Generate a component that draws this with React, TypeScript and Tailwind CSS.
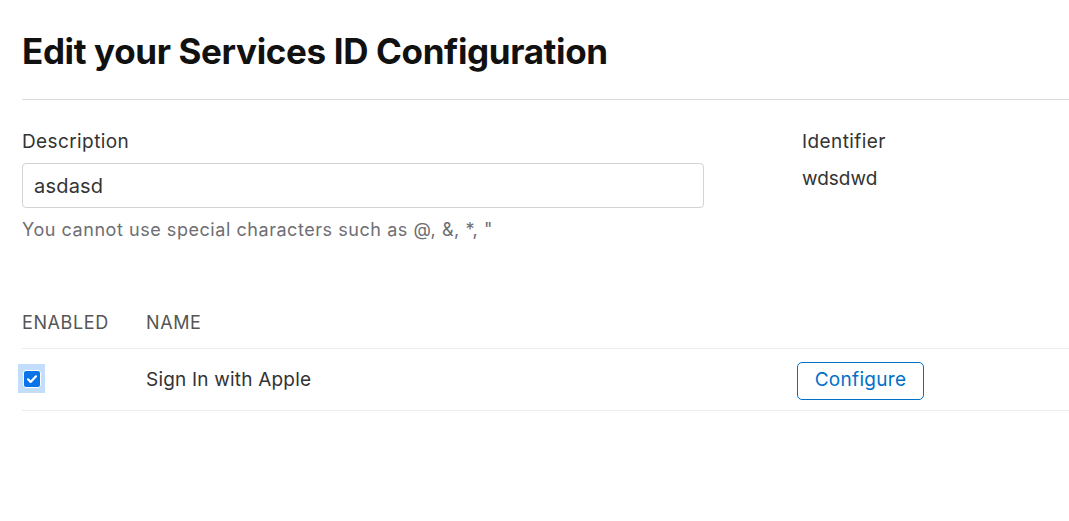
export default function App() {
  return (
    <div className="min-h-[521px] bg-white pl-[22px] font-['Inter',sans-serif] text-[#333]">
      <h1 className="pt-[29px] text-[35px] leading-[44px] font-bold text-[#111] tracking-[-0.36px]">
        Edit your Services ID Configuration
      </h1>
      <div className="mt-[26px] h-px bg-[#dcdcdc]" />

      <div className="mt-[30px] flex">
        <div className="w-[682px]">
          <div className="text-[19px] leading-[24px] tracking-[0.4px] text-[#333]">Description</div>
          <div className="mt-[9px] flex h-[45px] items-center rounded-[4px] border border-[#d2d2d7] px-[11px] text-[20px] tracking-[0.2px] text-[#333]">
            asdasd
          </div>
          <div className="mt-[11px] text-[18px] leading-[22px] tracking-[0.55px] text-[#6e6e73]">
            You cannot use special characters such as @, &amp;, *, "
          </div>
        </div>
        <div className="ml-[98px]">
          <div className="text-[19px] leading-[24px] tracking-[0.4px] text-[#333]">Identifier</div>
          <div className="mt-[13px] text-[19px] leading-[24px] text-[#333]">wdsdwd</div>
        </div>
      </div>

      <div className="mt-[68px] flex h-[39px] items-start text-[18px] tracking-[0.6px] text-[#555]">
        <div className="w-[124px]">ENABLED</div>
        <div>NAME</div>
      </div>
      <div className="flex h-[63px] items-center border-y border-[#ececec] pt-[2px]">
        <div className="w-[124px]">
          <span className="ml-[-4px] mt-[-4px] flex h-[29px] w-[27px] items-center justify-center bg-[#c3defa]">
            <span className="flex h-[18px] w-[18px] items-center justify-center rounded-[3px] border border-white bg-[#0a73e8]">
              <svg width="12" height="12" viewBox="0 0 12 12">
                <path d="M2 6.3l2.6 2.6L10 3.3" fill="none" stroke="#fff" strokeWidth="2.2" strokeLinecap="round" strokeLinejoin="round" />
              </svg>
            </span>
          </span>
        </div>
        <div className="w-[651px] text-[19px] tracking-[0.2px] text-[#333]">Sign In with Apple</div>
        <button className="flex h-[38px] w-[127px] items-center justify-center rounded-[5px] border border-[#0070c9] text-[19px] tracking-[0.3px] text-[#0070c9]">
          Configure
        </button>
      </div>
    </div>
  );
}
